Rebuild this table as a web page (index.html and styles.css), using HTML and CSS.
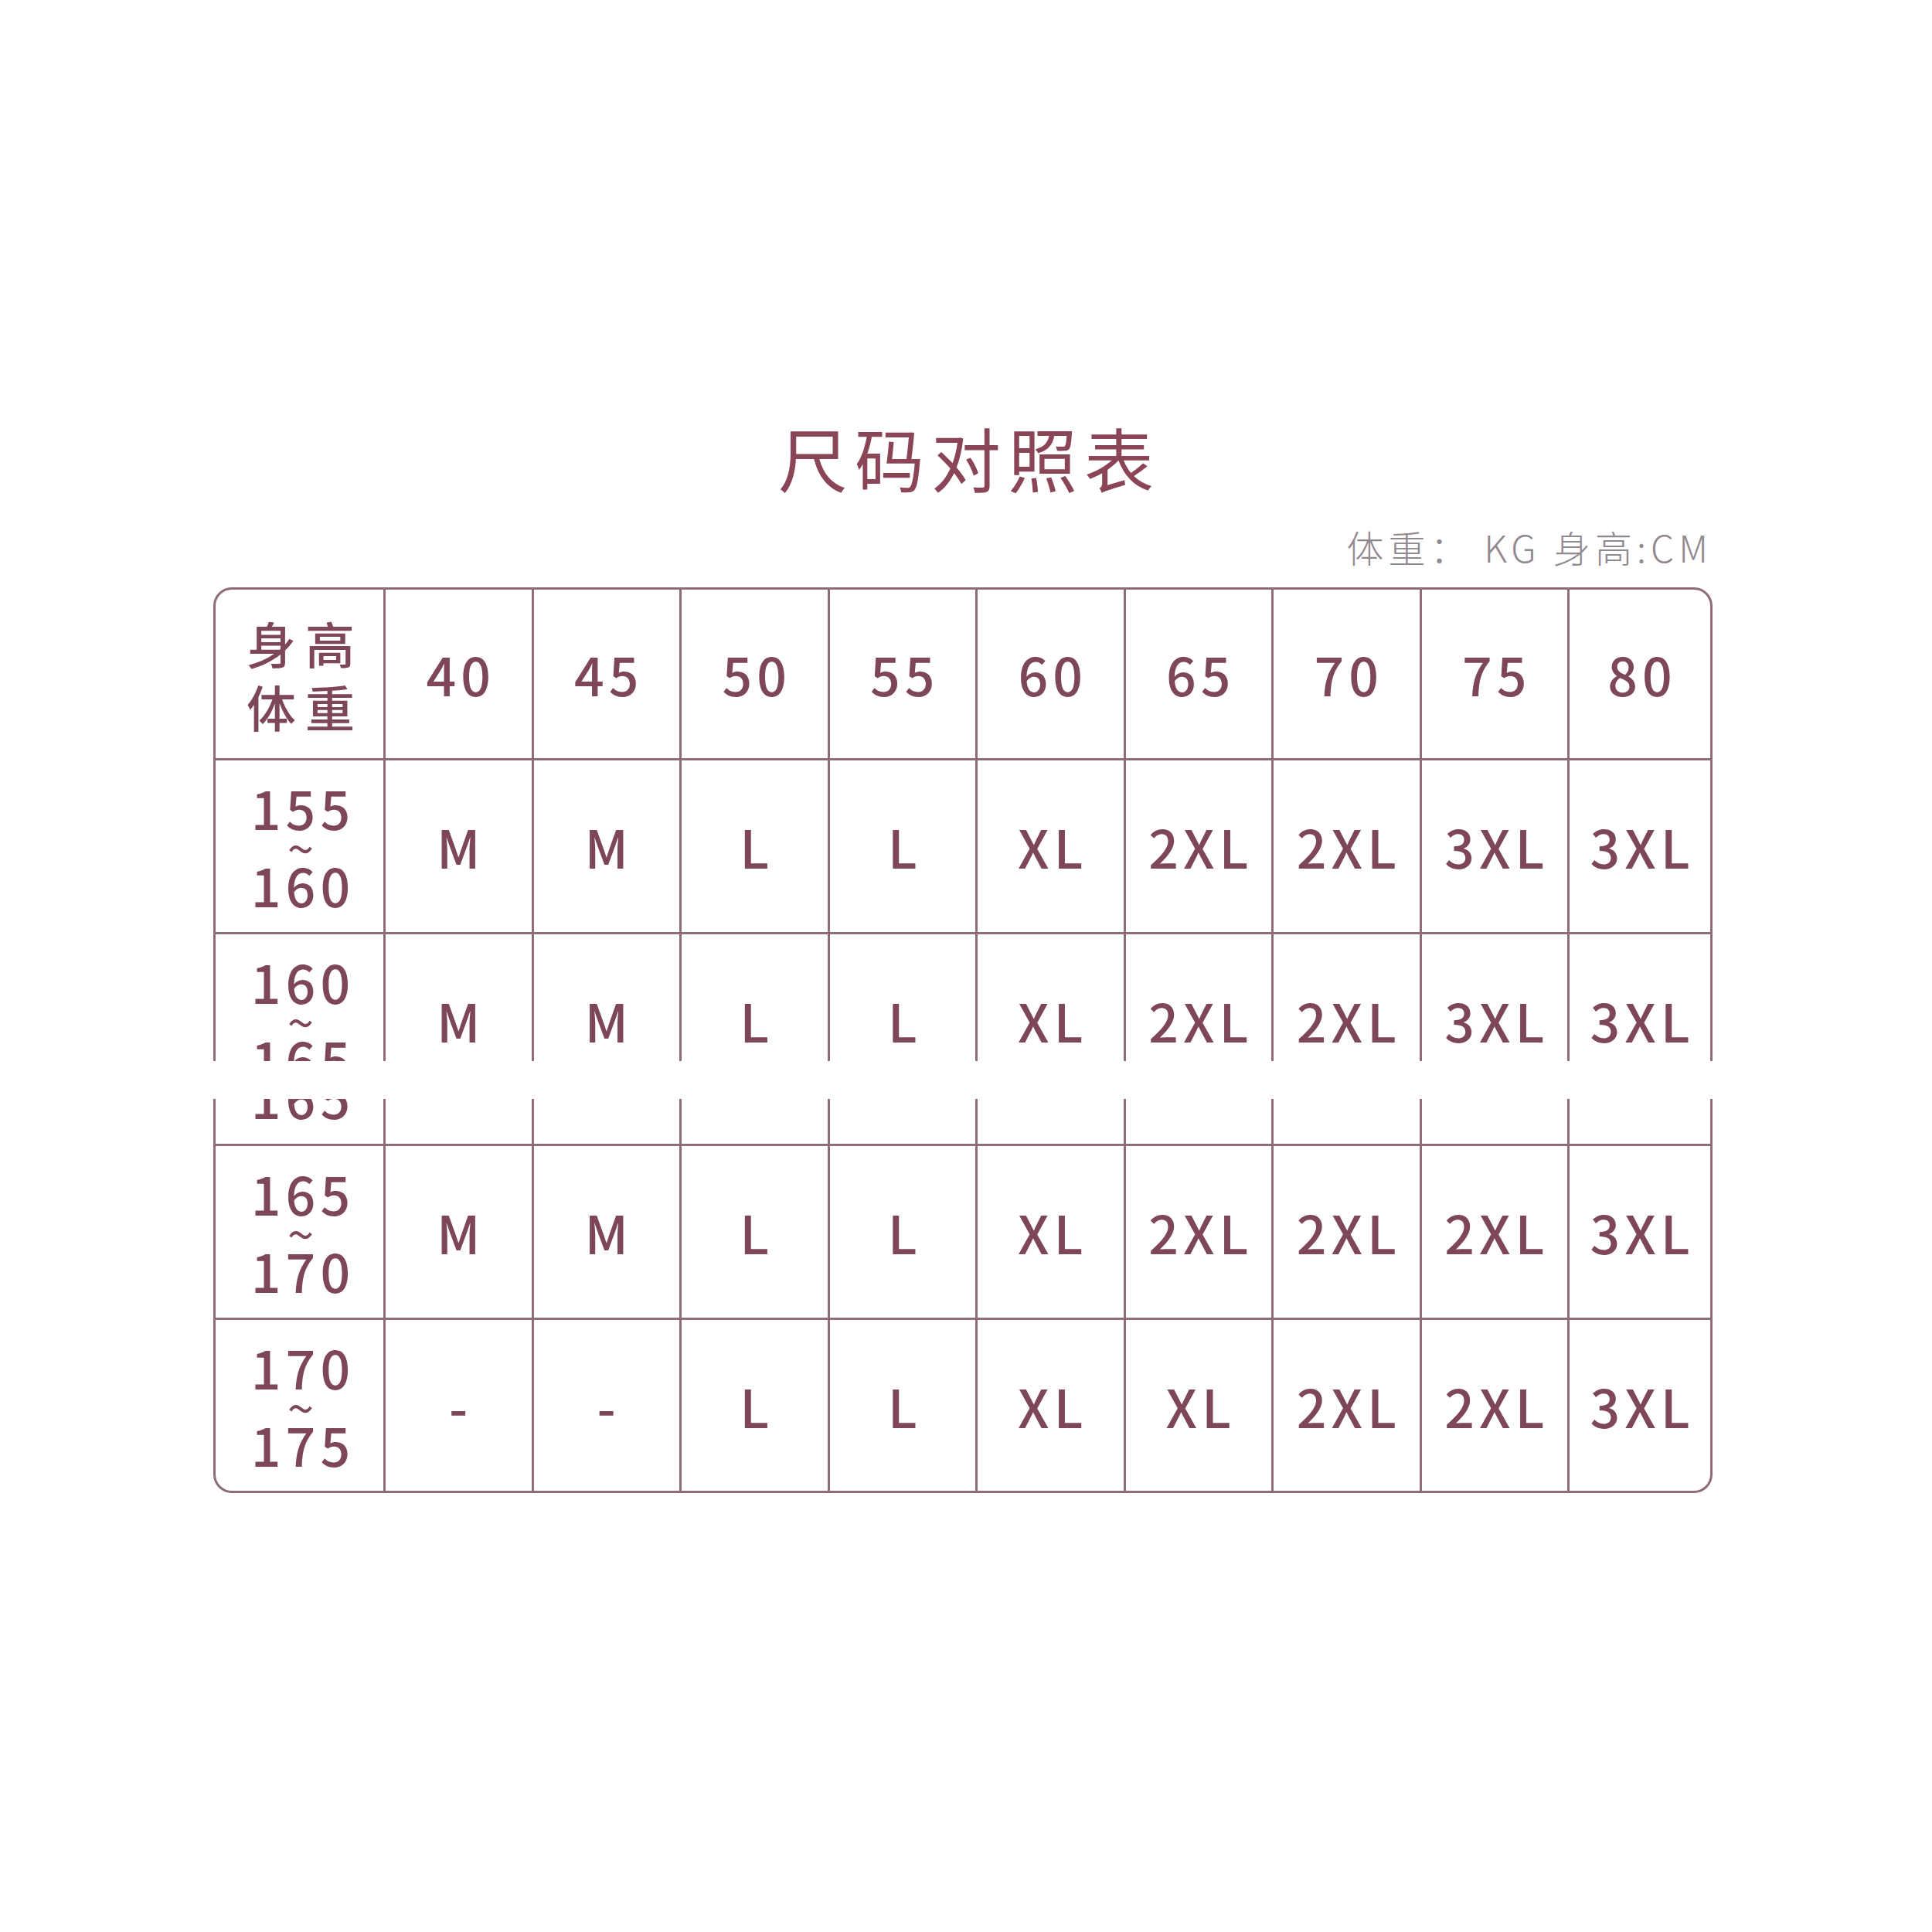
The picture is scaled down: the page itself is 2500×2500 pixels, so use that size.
FILE: index.html
```html
<!DOCTYPE html>
<html lang="zh-CN">
<head>
<meta charset="utf-8">
<title>尺码对照表</title>
<link rel="stylesheet" href="styles.css">
</head>
<body>
<main class="page">
  <h1 class="title">尺码对照表</h1>
  <p class="unit">体重：&#8201;KG 身高:CM</p>
  <div class="chart">
    <div class="row row-head">
      <div class="cell cell-first"><span class="corner-label">身高<br>体重</span></div>
      <div class="cell">40</div>
      <div class="cell">45</div>
      <div class="cell">50</div>
      <div class="cell">55</div>
      <div class="cell">60</div>
      <div class="cell">65</div>
      <div class="cell">70</div>
      <div class="cell">75</div>
      <div class="cell cell-last">80</div>
    </div>
    <div class="row">
      <div class="cell cell-first"><div class="range"><span class="num">155</span><span class="tilde">~</span><span class="num">160</span></div></div>
      <div class="cell">M</div>
      <div class="cell">M</div>
      <div class="cell">L</div>
      <div class="cell">L</div>
      <div class="cell">XL</div>
      <div class="cell">2XL</div>
      <div class="cell">2XL</div>
      <div class="cell">3XL</div>
      <div class="cell cell-last">3XL</div>
    </div>
    <div class="split split-top">
      <div class="row">
        <div class="cell cell-first"><div class="range"><span class="num">160</span><span class="tilde">~</span><span class="num">165</span></div></div>
        <div class="cell">M</div>
        <div class="cell">M</div>
        <div class="cell">L</div>
        <div class="cell">L</div>
        <div class="cell">XL</div>
        <div class="cell">2XL</div>
        <div class="cell">2XL</div>
        <div class="cell">3XL</div>
        <div class="cell cell-last">3XL</div>
      </div>
    </div>
    <div class="band"></div>
    <div class="split split-bottom" aria-hidden="true">
      <div class="row row-shift">
        <div class="cell cell-first"><div class="range"><span class="num ghost">160</span><span class="tilde ghost">~</span><span class="num">165</span></div></div>
        <div class="cell"></div>
        <div class="cell"></div>
        <div class="cell"></div>
        <div class="cell"></div>
        <div class="cell"></div>
        <div class="cell"></div>
        <div class="cell"></div>
        <div class="cell"></div>
        <div class="cell cell-last"></div>
      </div>
    </div>
    <div class="row">
      <div class="cell cell-first"><div class="range"><span class="num">165</span><span class="tilde">~</span><span class="num">170</span></div></div>
      <div class="cell">M</div>
      <div class="cell">M</div>
      <div class="cell">L</div>
      <div class="cell">L</div>
      <div class="cell">XL</div>
      <div class="cell">2XL</div>
      <div class="cell">2XL</div>
      <div class="cell">2XL</div>
      <div class="cell cell-last">3XL</div>
    </div>
    <div class="row row-end">
      <div class="cell cell-first"><div class="range"><span class="num">170</span><span class="tilde">~</span><span class="num">175</span></div></div>
      <div class="cell">-</div>
      <div class="cell">-</div>
      <div class="cell">L</div>
      <div class="cell">L</div>
      <div class="cell">XL</div>
      <div class="cell">XL</div>
      <div class="cell">2XL</div>
      <div class="cell">2XL</div>
      <div class="cell cell-last">3XL</div>
    </div>
  </div>
</main>
</body>
</html>
```

FILE: styles.css
```css
* {
  box-sizing: border-box;
}

html, body {
  margin: 0;
  padding: 0;
  background: #ffffff;
}

body {
  width: 2500px;
  height: 2500px;
  font-family: "Noto Sans CJK SC", "Noto Sans", sans-serif;
  color: #7e4757;
}

.page {
  padding-top: 545px;
}

.title {
  margin: 0;
  text-align: center;
  font-size: 90px;
  line-height: 92px;
  font-weight: 400;
  letter-spacing: 9px;
  padding-left: 9px;
  color: #8a4657;
}

.unit {
  margin: 46px 0 0 276px;
  width: 1940px;
  text-align: right;
  font-size: 48px;
  line-height: 48px;
  font-weight: 300;
  letter-spacing: 6px;
  color: #928890;
}

.chart {
  margin: 29px 0 0 276px;
  width: 1940px;
}

.row {
  display: grid;
  grid-template-columns: 223px repeat(8, 191.5px) 185px;
  height: 225px;
}

.row-head {
  height: 224px;
}

.row-head .cell {
  border-top: 3px solid #8d6b77;
}

.row-end {
  height: 224px;
}

.cell {
  display: flex;
  align-items: center;
  justify-content: center;
  border-right: 3px solid #8d6b77;
  border-bottom: 3px solid #8d6b77;
  font-size: 68px;
  line-height: 1;
  font-weight: 500;
  letter-spacing: 6px;
  padding-left: 6px;
}

.cell-first {
  border-left: 3px solid #8d6b77;
  padding-left: 9px;
}

.row-head .cell-first {
  border-top-left-radius: 24px;
}

.row-head .cell-last {
  border-top-right-radius: 24px;
}

.row-end .cell-first {
  border-bottom-left-radius: 24px;
}

.row-end .cell-last {
  border-bottom-right-radius: 24px;
}

.corner-label {
  font-size: 64px;
  line-height: 82px;
  letter-spacing: 12px;
  padding-left: 6px;
}

.range {
  display: flex;
  flex-direction: column;
  align-items: center;
}

.num {
  display: block;
  font-size: 68px;
  line-height: 50px;
  height: 50px;
}

.tilde {
  display: block;
  font-size: 62px;
  line-height: 50px;
  height: 50px;
  letter-spacing: 0;
  margin-right: 6px;
  font-weight: 400;
}

.ghost {
  visibility: hidden;
}

.split {
  overflow: hidden;
}

.split-top {
  height: 164px;
}

.band {
  height: 49px;
  background: #ffffff;
}

.split-bottom {
  height: 61px;
}

.row-shift {
  margin-top: -164px;
}
```
